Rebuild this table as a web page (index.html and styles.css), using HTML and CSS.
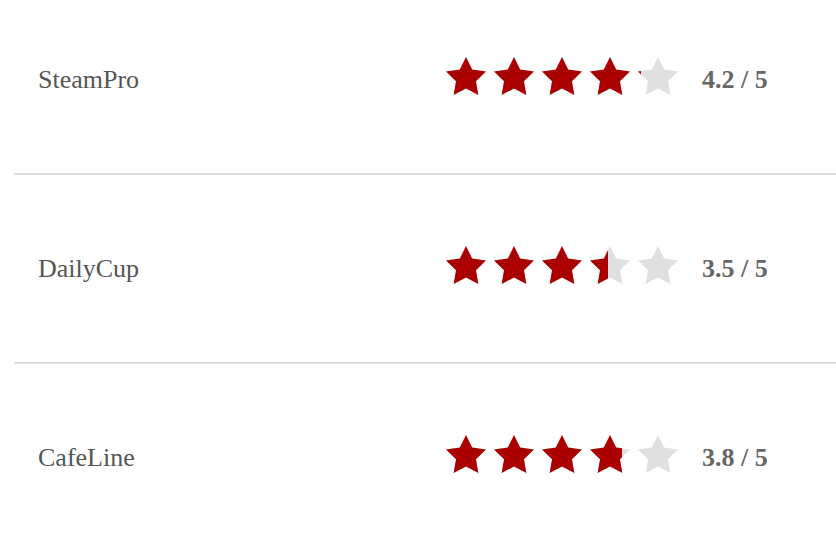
FILE: index.html
```html
<!DOCTYPE html>
<html lang="en">
<head>
    <meta charset="UTF-8">
    <meta name="viewport" content="width=device-width, initial-scale=1.0">
    <title>Ratings</title>
    <link rel="stylesheet" href="styles.css">
</head>
<body>

    <svg width="0" height="0" class="defs">
        <defs>
            <polygon id="star" points="12,2 15.09,8.26 22,9.27 17,14.14 18.18,21.02 12,17.77 5.82,21.02 7,14.14 2,9.27 8.91,8.26"/>
        </defs>
    </svg>

    <div class="rating-list">
        <div class="rating-row">
            <span class="name">SteamPro</span>
            <div class="stars">
                <div class="stars-base">
                    <svg viewBox="2 2 20 19.02"><use href="#star"/></svg>
                    <svg viewBox="2 2 20 19.02"><use href="#star"/></svg>
                    <svg viewBox="2 2 20 19.02"><use href="#star"/></svg>
                    <svg viewBox="2 2 20 19.02"><use href="#star"/></svg>
                    <svg viewBox="2 2 20 19.02"><use href="#star"/></svg>
                </div>
                <div class="stars-fill" style="width: 84%">
                    <svg viewBox="2 2 20 19.02"><use href="#star"/></svg>
                    <svg viewBox="2 2 20 19.02"><use href="#star"/></svg>
                    <svg viewBox="2 2 20 19.02"><use href="#star"/></svg>
                    <svg viewBox="2 2 20 19.02"><use href="#star"/></svg>
                    <svg viewBox="2 2 20 19.02"><use href="#star"/></svg>
                </div>
            </div>
            <span class="score">4.2 / 5</span>
        </div>

        <div class="rating-row">
            <span class="name">DailyCup</span>
            <div class="stars">
                <div class="stars-base">
                    <svg viewBox="2 2 20 19.02"><use href="#star"/></svg>
                    <svg viewBox="2 2 20 19.02"><use href="#star"/></svg>
                    <svg viewBox="2 2 20 19.02"><use href="#star"/></svg>
                    <svg viewBox="2 2 20 19.02"><use href="#star"/></svg>
                    <svg viewBox="2 2 20 19.02"><use href="#star"/></svg>
                </div>
                <div class="stars-fill" style="width: 70%">
                    <svg viewBox="2 2 20 19.02"><use href="#star"/></svg>
                    <svg viewBox="2 2 20 19.02"><use href="#star"/></svg>
                    <svg viewBox="2 2 20 19.02"><use href="#star"/></svg>
                    <svg viewBox="2 2 20 19.02"><use href="#star"/></svg>
                    <svg viewBox="2 2 20 19.02"><use href="#star"/></svg>
                </div>
            </div>
            <span class="score">3.5 / 5</span>
        </div>

        <div class="rating-row">
            <span class="name">CafeLine</span>
            <div class="stars">
                <div class="stars-base">
                    <svg viewBox="2 2 20 19.02"><use href="#star"/></svg>
                    <svg viewBox="2 2 20 19.02"><use href="#star"/></svg>
                    <svg viewBox="2 2 20 19.02"><use href="#star"/></svg>
                    <svg viewBox="2 2 20 19.02"><use href="#star"/></svg>
                    <svg viewBox="2 2 20 19.02"><use href="#star"/></svg>
                </div>
                <div class="stars-fill" style="width: 76%">
                    <svg viewBox="2 2 20 19.02"><use href="#star"/></svg>
                    <svg viewBox="2 2 20 19.02"><use href="#star"/></svg>
                    <svg viewBox="2 2 20 19.02"><use href="#star"/></svg>
                    <svg viewBox="2 2 20 19.02"><use href="#star"/></svg>
                    <svg viewBox="2 2 20 19.02"><use href="#star"/></svg>
                </div>
            </div>
            <span class="score">3.8 / 5</span>
        </div>
    </div>

</body>
</html>
```

FILE: styles.css
```css
body {
    font-family: "Liberation Serif", "Times New Roman", serif;
    margin: 0;
    padding: 0 0 0 14px;
    overflow: hidden;
    background-color: #fff;
}

.defs {
    position: absolute;
}

.rating-list {
    width: 860px;
    margin-top: -14px;
}

.rating-row {
    display: grid;
    grid-template-columns: 384px auto auto;
    column-gap: 24px;
    align-items: center;
    justify-content: start;
    height: 187px;
    padding: 0 24px;
    border-bottom: 2px solid #dddddd;
}

.rating-row:last-child {
    border-bottom: none;
}

.name {
    font-size: 26px;
    color: #555;
}

.score {
    font-size: 26px;
    font-weight: bold;
    color: #666;
}

/* Stars */
.stars {
    position: relative;
    width: 232px;
    height: 38px;
    margin-bottom: 8px;
}

.stars-base,
.stars-fill {
    display: flex;
    gap: 8px;
    height: 38px;
}

.stars svg {
    flex: none;
    width: 40px;
    height: 38px;
}

.stars-base svg {
    fill: #e0e0e0;
}

.stars-fill {
    position: absolute;
    top: 0;
    left: 0;
    overflow: hidden;
}

.stars-fill svg {
    fill: #aa0000;
}
```
